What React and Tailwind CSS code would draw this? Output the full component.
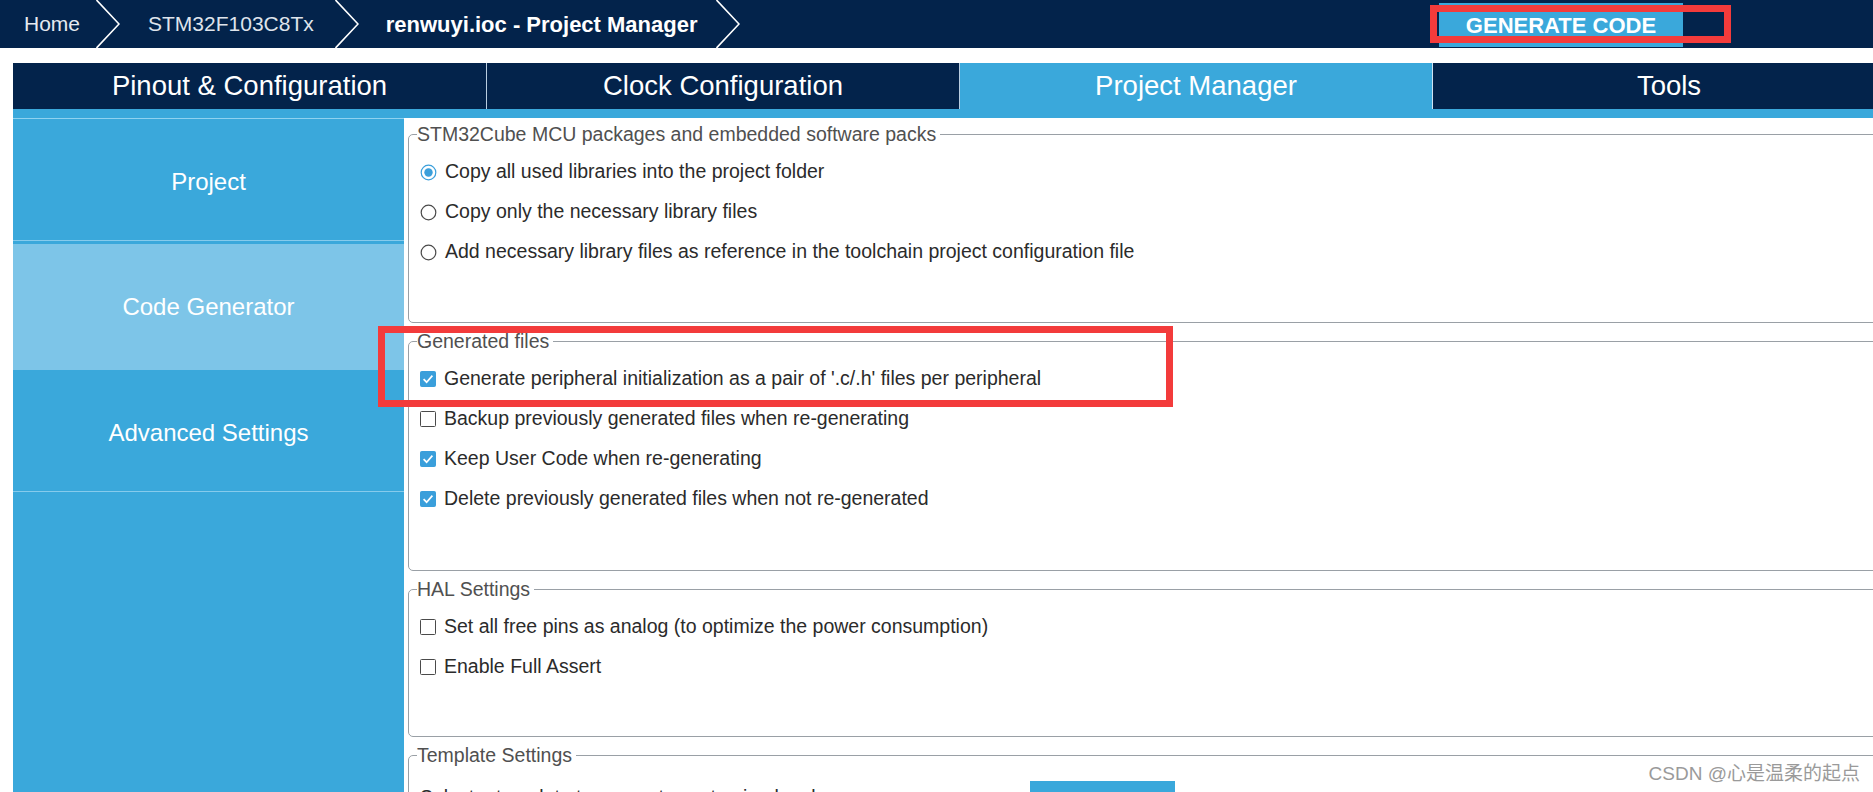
import React from "react";

const NAVY = "bg-[#03234b]";

function Chevron() {
  return (
    <svg width="24" height="48" viewBox="0 0 24 48" className="shrink-0 block">
      <path d="M0.5 0 L23 24 L0.5 48" fill="none" stroke="#ffffff" strokeWidth="1.6" />
    </svg>
  );
}

function Radio({ checked }) {
  return (
    <svg width="17" height="17" viewBox="0 0 17 17" className="shrink-0 block">
      <circle cx="8.5" cy="8.5" r="7.3" fill="#ffffff" stroke={checked ? "#3a9fdb" : "#4a4a4a"} strokeWidth="1.2" />
      {checked && <circle cx="8.5" cy="8.5" r="4.2" fill="#3a9fdb" />}
    </svg>
  );
}

function Check({ checked }) {
  return (
    <svg width="16" height="16" viewBox="0 0 16 16" className="shrink-0 block">
      {checked ? (
        <>
          <rect x="0.5" y="0.5" width="15" height="15" rx="1" fill="#3a9fdb" stroke="#3a9fdb" />
          <path d="M3.6 8.2 L6.6 11.2 L12.4 4.6" fill="none" stroke="#ffffff" strokeWidth="1.7" />
        </>
      ) : (
        <rect x="0.5" y="0.5" width="15" height="15" rx="1" fill="#ffffff" stroke="#4a4a4a" />
      )}
    </svg>
  );
}

function Row({ control, children }) {
  return (
    <div className="ml-[3px] h-[40px] flex items-center gap-[8px] text-[19.5px] text-[#2b2b2b] whitespace-nowrap">
      {control}
      <span>{children}</span>
    </div>
  );
}

function Group({ title, className, children }) {
  return (
    <fieldset className={`w-[1480px] border border-[#9aa0a6] rounded-[5px] pl-[8px] pt-[7px] ${className}`}>
      <legend className="pr-[4px] text-[19.5px] leading-[22px] text-[#505050] whitespace-nowrap">{title}</legend>
      {children}
    </fieldset>
  );
}

export default function App() {
  return (
    <div className="relative w-[1873px] h-[792px] overflow-hidden bg-white font-['Liberation_Sans',Arial,sans-serif]">
      {/* Top bar */}
      <div className={`h-[48px] ${NAVY} flex items-start`}>
        <div className="w-[1439px] shrink-0 h-full flex items-center">
          <span className="ml-[24px] text-[21px] text-[#e6eaf0]">Home</span>
          <div className="ml-[16px]"><Chevron /></div>
          <span className="ml-[28px] text-[21px] text-[#dfe4ec]">STM32F103C8Tx</span>
          <div className="ml-[21px]"><Chevron /></div>
          <span className="ml-[27px] text-[22px] font-bold text-white">renwuyi.ioc - Project Manager</span>
          <div className="ml-[18px]"><Chevron /></div>
        </div>
        <div className="mt-[3px] w-[244px] h-[44px] bg-[#3aa8db] flex items-center justify-center text-[22px] font-bold text-white">
          GENERATE CODE
        </div>
      </div>

      {/* Tabs */}
      <div className="mt-[15px] ml-[13px] h-[46px] flex text-[27.5px] text-white whitespace-nowrap">
        <div className={`w-[473px] shrink-0 ${NAVY} flex items-center justify-center`}>Pinout &amp; Configuration</div>
        <div className={`w-[473px] shrink-0 ${NAVY} border-l border-[#b9cde0] flex items-center justify-center`}>Clock Configuration</div>
        <div className="w-[473px] shrink-0 bg-[#3aa8db] border-l border-[#b9cde0] flex items-center justify-center">Project Manager</div>
        <div className={`w-[473px] shrink-0 ${NAVY} border-l border-[#cfe3f2] flex items-center justify-center`}>Tools</div>
      </div>
      <div className="ml-[13px] h-[9px] bg-[#3aa8db]" />

      {/* Body */}
      <div className="ml-[13px] flex h-[674px]">
        <div className="w-[391px] shrink-0 bg-[#3aa8db] border-t border-[#8fd2f0] text-[24px] text-white">
          <div className="h-[122px] border-b border-[#86cbec] flex items-center justify-center pt-[4px]">Project</div>
          <div className="mt-[3px] h-[126px] bg-[#7dc5e8] flex items-center justify-center">Code Generator</div>
          <div className="h-[122px] border-b border-[#86cbec] flex items-center justify-center pt-[4px]">Advanced Settings</div>
        </div>
        <div className="flex-1 pl-[4px] pt-[5px]">
          <Group title="STM32Cube MCU packages and embedded software packs" className="h-[200px]">
            <Row control={<Radio checked />}>Copy all used libraries into the project folder</Row>
            <Row control={<Radio />}>Copy only the necessary library files</Row>
            <Row control={<Radio />}>Add necessary library files as reference in the toolchain project configuration file</Row>
          </Group>
          <Group title="Generated files" className="mt-[7px] h-[241px]">
            <Row control={<Check checked />}>Generate peripheral initialization as a pair of '.c/.h' files per peripheral</Row>
            <Row control={<Check />}>Backup previously generated files when re-generating</Row>
            <Row control={<Check checked />}>Keep User Code when re-generating</Row>
            <Row control={<Check checked />}>Delete previously generated files when not re-generated</Row>
          </Group>
          <Group title="HAL Settings" className="mt-[7px] h-[159px]">
            <Row control={<Check />}>Set all free pins as analog (to optimize the power consumption)</Row>
            <Row control={<Check />}>Enable Full Assert</Row>
          </Group>
          <Group title="Template Settings" className="mt-[7px] h-[120px]">
            <div className="ml-[3px] h-[40px] flex items-center text-[19.5px] text-[#2b2b2b] whitespace-nowrap">
              <span className="w-[610px] shrink-0 mt-[10px]">Select a template to generate customized code</span>
              <div className="w-[145px] h-[24px] bg-[#3aa8db] text-white text-[19px] flex items-start justify-center pt-[9px]">Settings...</div>
            </div>
          </Group>
        </div>
      </div>

      {/* Annotations */}
      <div className="absolute left-[1430px] top-[5px] w-[301px] h-[38px] border-[7px] border-[#f33b3b]" />
      <div className="absolute left-[378px] top-[326px] w-[795px] h-[81px] border-[7px] border-[#f33b3b]" />
      <div className="absolute right-[13px] bottom-[4px] text-[19px] text-[#9a9a9a] font-['Liberation_Sans','Noto_Sans_CJK_SC',sans-serif]">
        CSDN @心是温柔的起点
      </div>
    </div>
  );
}
